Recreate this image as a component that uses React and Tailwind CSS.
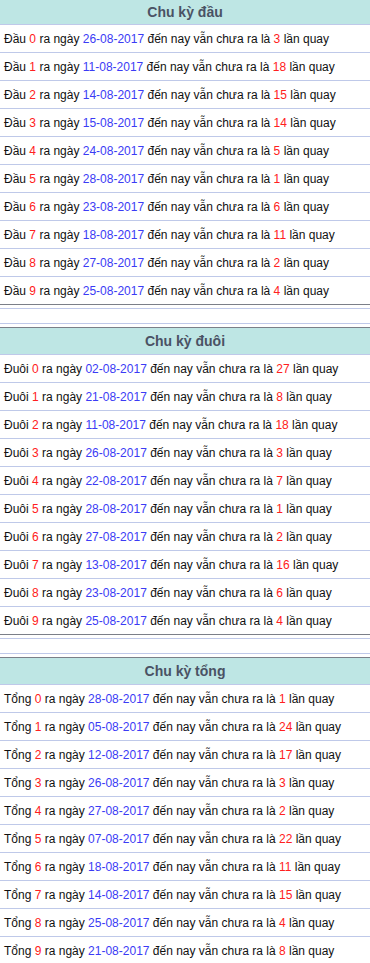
import React from "react";

const sections = [
  {
    title: "Chu kỳ đầu",
    label: "Đầu",
    rows: [
      ["0", "26-08-2017", "3"],
      ["1", "11-08-2017", "18"],
      ["2", "14-08-2017", "15"],
      ["3", "15-08-2017", "14"],
      ["4", "24-08-2017", "5"],
      ["5", "28-08-2017", "1"],
      ["6", "23-08-2017", "6"],
      ["7", "18-08-2017", "11"],
      ["8", "27-08-2017", "2"],
      ["9", "25-08-2017", "4"],
    ],
  },
  {
    title: "Chu kỳ đuôi",
    label: "Đuôi",
    rows: [
      ["0", "02-08-2017", "27"],
      ["1", "21-08-2017", "8"],
      ["2", "11-08-2017", "18"],
      ["3", "26-08-2017", "3"],
      ["4", "22-08-2017", "7"],
      ["5", "28-08-2017", "1"],
      ["6", "27-08-2017", "2"],
      ["7", "13-08-2017", "16"],
      ["8", "23-08-2017", "6"],
      ["9", "25-08-2017", "4"],
    ],
  },
  {
    title: "Chu kỳ tổng",
    label: "Tổng",
    rows: [
      ["0", "28-08-2017", "1"],
      ["1", "05-08-2017", "24"],
      ["2", "12-08-2017", "17"],
      ["3", "26-08-2017", "3"],
      ["4", "27-08-2017", "2"],
      ["5", "07-08-2017", "22"],
      ["6", "18-08-2017", "11"],
      ["7", "14-08-2017", "15"],
      ["8", "25-08-2017", "4"],
      ["9", "21-08-2017", "8"],
    ],
  },
];

function Section({ s, first, last }) {
  return (
    <div>
      <div
        className={
          "bg-[#bee6e4] flex items-center justify-center font-bold text-[14px] text-[#4a5264] border-b border-[#bfc9e9] " +
          (first ? "h-[25px]" : "h-[28px] border-t border-t-[#7b7f88]")
        }
      >
        {s.title}
      </div>
      {s.rows.map((r, i) => (
        <div
          key={i}
          className={
            "h-[28px] flex items-center pl-[4px] text-[12px] text-[#111] whitespace-nowrap border-b " +
            (i === s.rows.length - 1 && !last ? "border-[#7b7f88]" : "border-[#bfc9e9]")
          }
        >
          <span>
            {s.label} <span className="text-[#ff2020]">{r[0]}</span> ra ngày{" "}
            <span className="text-[#3b3bf5]">{r[1]}</span> đến nay vẫn chưa ra là{" "}
            <span className="text-[#ff2020]">{r[2]}</span> lần quay
          </span>
        </div>
      ))}
      {!last && (
        <div className="pt-[3px] pb-[3px]">
          <div className="border-t border-b border-[#bfc9e9] h-[16px]"></div>
        </div>
      )}
    </div>
  );
}

export default function App() {
  return (
    <div className="w-[370px] bg-white font-['Liberation_Sans',Arial,sans-serif] overflow-hidden h-[963px]">
      {sections.map((s, i) => (
        <Section key={i} s={s} first={i === 0} last={i === sections.length - 1} />
      ))}
    </div>
  );
}
